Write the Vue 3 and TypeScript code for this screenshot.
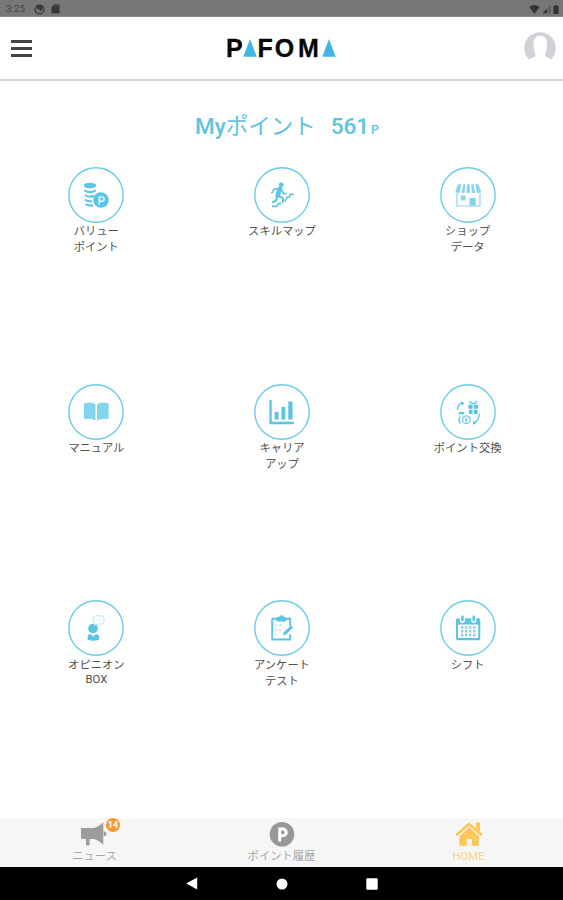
<script setup lang="ts">
interface MenuItem {
  id: string
  lines: string[]
}

const points = 561
const newsCount = 14

const items: MenuItem[] = [
  { id: 'value', lines: ['バリュー', 'ポイント'] },
  { id: 'skill', lines: ['スキルマップ'] },
  { id: 'shop', lines: ['ショップ', 'データ'] },
  { id: 'manual', lines: ['マニュアル'] },
  { id: 'career', lines: ['キャリア', 'アップ'] },
  { id: 'exchange', lines: ['ポイント交換'] },
  { id: 'opinion', lines: ['オピニオン', 'BOX'] },
  { id: 'survey', lines: ['アンケート', 'テスト'] },
  { id: 'shift', lines: ['シフト'] },
]

const calendarRows = [27.5, 31.3, 35.1]
const calendarCols = [22.2, 26.2, 30.2, 34.2]
</script>

<template>
  <div class="screen">
    <div class="status">
      <div class="status-left">
        <span class="time">3:25</span>
        <svg width="11" height="11" viewBox="0 0 11 11">
          <circle cx="5.5" cy="5.5" r="4.4" fill="none" stroke="#363636" stroke-width="1.2" />
          <path d="M3 2H8.6V5.3L5.8 8V5.3H3Z" fill="#363636" />
        </svg>
        <svg class="sd" width="9" height="10" viewBox="0 0 9 10">
          <path d="M3 .5H8.5V9.5H.5V3Z" fill="#363636" />
          <path d="M3.3 1.7v1.6M5 1.7v1.6M6.7 1.7v1.6" stroke="#666" stroke-width=".6" />
        </svg>
      </div>
      <div class="status-right">
        <svg width="11" height="9" viewBox="0 0 11 9"><path d="M.3 2Q5.5-1.8 10.7 2L5.5 8.7Z" fill="#333" /></svg>
        <svg width="9" height="9" viewBox="0 0 9 9">
          <path d="M8 .8V8.3H.5Z" fill="#686868" />
          <path d="M5 3.8V8.3H.5Z" fill="#333" />
          <path d="M8 1V8.3" stroke="#444" stroke-width=".8" />
        </svg>
        <svg width="6" height="9" viewBox="0 0 6 9"><path d="M1.8 0H4.2V1H5.6V9H.4V1H1.8Z" fill="#333" /></svg>
      </div>
    </div>

    <header class="header">
      <div class="burger"><i></i><i></i><i></i></div>
      <div class="logo" aria-label="PAFOMA">
        <span class="l-p">P</span>
        <svg width="14" height="18" viewBox="0 0 14 18"><path d="M7 0L13.7 17.7H.3Z" fill="#41b6e6" /></svg>
        <span class="l-f">F</span><span class="l-o">O</span><span class="l-m">M</span>
        <svg width="14" height="18" viewBox="0 0 14 18"><path d="M7 0L13.7 17.7H.3Z" fill="#41b6e6" /></svg>
      </div>
      <svg class="avatar" width="32" height="32" viewBox="0 0 32 32">
        <path d="M5.2 27.5A15.8 15.8 0 1 1 26.8 27.5Q24.5 25.5 21.5 24.5Q20.3 23.7 21.3 21.5Q23.2 17.8 23 12.5C23 6.5 20.8 3.7 16.3 3.7S9.6 6.5 9.6 12.5Q9.5 17.8 11.3 21.5Q12 23.7 10.8 24.5Q7.5 25.5 5.2 27.5Z" fill="#cfd2d6" />
      </svg>
    </header>

    <main class="main">
      <h1 class="points"><b>My</b>ポイント<b class="num">{{ points }}</b><small>P</small></h1>

      <div class="grid">
        <div v-for="item in items" :key="item.id" class="item">
          <svg class="icon" width="56" height="56" viewBox="0 0 56 56" fill="#5bc4e4">
            <circle cx="28" cy="28" r="27.2" fill="none" stroke="#6dcbea" stroke-width="1.4" />

            <g v-if="item.id === 'value'">
              <ellipse cx="22" cy="18.5" rx="6.2" ry="2.7" />
              <g fill="none" stroke="#5bc4e4" stroke-width="2.1">
                <path d="M16.3 23.4Q22 26.8 27.8 23.4" />
                <path d="M17 28Q21 31 26 28.8" />
                <path d="M17 32.6Q20 34.8 24 34.3" />
                <path d="M17.5 37Q20 39 25 38.5" />
              </g>
              <circle cx="33" cy="33" r="7.8" />
              <path d="M31.3 37.4V30H34a2 2 0 0 1 0 4.2H31.5" fill="none" stroke="#e0f5fc" stroke-width="1.6" />
            </g>

            <g v-else-if="item.id === 'skill'" fill="none" stroke="#5bc4e4" stroke-linejoin="round">
              <circle cx="27.2" cy="18" r="2.4" fill="#5bc4e4" stroke="none" />
              <path d="M26 21.8L23.6 28.6" stroke-width="4.6" stroke-linecap="round" />
              <path d="M24.5 21.5L20 22.4L17.5 26.4M27 22.3L29.5 26.3L32.5 26.8" stroke-width="1.7" />
              <path d="M24 28.8L29.2 31.4L28.6 36M23 28.8L22.3 33.3L18 35.7" stroke-width="2.1" />
              <path d="M18 39.4H22.5L24.8 36.4H27.3M31 34.6L33 30H35.3L36.2 27.3H39.8" stroke-width="1.7" />
            </g>

            <g v-else-if="item.id === 'shop'">
              <path d="M18 17.2H38.4L40.8 23.5V24.8Q38.6 27.2 36 25Q33.5 27.3 31 25Q28.3 27.3 25.7 25Q23 27.3 20.6 25Q17.8 27.2 15.6 24.8V23.5Z" fill="#8bd6ec" />
              <path d="M22.4 17L20.5 25.5M26.3 17L25.5 25.5M30.3 17L31 25.5M34.4 17L36 25.5" stroke="#fff" stroke-width="1.6" />
              <path d="M17 26V39H40V26" fill="none" stroke="#8bd6ec" stroke-width="1.2" />
              <path d="M20.8 28.5H25.5V33.5H20.8ZM29.5 31H35.7V38.8H29.5Z" fill="#83d3ea" />
            </g>

            <g v-else-if="item.id === 'manual'" fill="#83d5ec">
              <path d="M15.9 19.6Q23.5 17.2 27.5 20.6V36.4Q23.5 34 15.9 35Z" />
              <path d="M40.6 19.6Q33 17.2 29 20.6V36.4Q33 34 40.6 35Z" />
            </g>

            <g v-else-if="item.id === 'career'">
              <path d="M15.4 16H17.7V37.8H40V40.3H15.4Z" />
              <path d="M20.6 28H24.6V35.6H20.6ZM27.4 23H31.3V35.6H27.4ZM34.3 17.6H38.5V35.6H34.3Z" />
            </g>

            <g v-else-if="item.id === 'exchange'">
              <path d="M28.3 20.7H32.6V24.7H28.3ZM33.8 20.7H38.2V24.7H33.8ZM29 25.7H32.6V30H29ZM33.8 25.7H37.6V30H33.8Z" />
              <g fill="none" stroke="#66c9e7" stroke-width="1">
                <path d="M33 20Q28.5 19.5 29.6 17.5Q31.5 16.7 33 20Q35.5 16 37 17.5Q37.4 19.7 33 20" />
                <path d="M17.3 26.2Q17.7 20.5 22 19M39.3 29.5Q39 36.8 34 39" stroke-width="1.4" />
                <path d="M20.2 32.3Q17.8 36 20.2 39.5" stroke-width="1.4" />
                <circle cx="26.3" cy="35.7" r="3.8" stroke-width="1.3" />
              </g>
              <path d="M20.8 17.4L24.7 18.8L21.8 21.5ZM33 37V40.8L36.6 38.7ZM19.5 28H24.3V30.3H18Z" />
              <path d="M24.7 33.6L26.3 35.7L27.9 33.6M26.3 35.7V38.2M24.9 36.4H27.7" fill="none" stroke="#5bc4e4" stroke-width="1" />
            </g>

            <g v-else-if="item.id === 'opinion'">
              <circle cx="25" cy="28.5" r="4.8" />
              <path d="M19.6 39.8V36.4Q20 33.8 22.7 34.2L25.2 36.6L27.7 34.2Q30.7 33.8 31.1 36.4V39.8Q25.3 41.6 19.6 39.8Z" />
              <path d="M28 15.8H34Q36.1 16 36.1 18.5V21.5Q36 23.6 34 24H29.3L26 25.6L26.6 23.2Q24.6 22.2 25 19.5Q25 16.2 28 15.8Z" fill="#fff" stroke="#a5dff0" stroke-width=".8" />
              <path d="M27.7 20H33.5" stroke="#b5e4f2" stroke-width="1" stroke-dasharray="1.4 .8" />
            </g>

            <g v-else-if="item.id === 'survey'">
              <path d="M18.2 18.8H36.2V26M36.2 34.5V39.5H18.2V18.8" fill="none" stroke="#5bc4e4" stroke-width="1.9" />
              <path d="M22.5 17H25L26 15.6H29L30 17H32V21.6H22.5Z" />
              <path d="M21.4 25.2H23.2M21.4 29.7H23.2M21.4 34H23.2M25 25.2H28M25 29.7H27" stroke="#a5dff0" stroke-width="1.2" />
              <path d="M29.8 32.2L36.8 25.5L39 27.6L32 34.4L29 35.4Z" />
            </g>

            <g v-else>
              <path fill-rule="evenodd" d="M17.8 18.2H38.5Q40.3 18.2 40.3 20V38.3Q40.3 40.2 38.5 40.2H17.8Q16 40.2 16 38.3V20Q16 18.2 17.8 18.2ZM18 24.4V38.1H38.3V24.4Z" />
              <path d="M22.4 16.5V20.4M33.8 16.5V20.4" stroke="#fff" stroke-width="5" stroke-linecap="round" />
              <path d="M22.4 16.7V20M33.8 16.7V20" stroke="#5bc4e4" stroke-width="2.6" stroke-linecap="round" />
              <template v-for="y in calendarRows" :key="y">
                <rect v-for="x in calendarCols" :key="x" :x="x - 1.2" :y="y - 1.2" width="2.4" height="2.4" fill="#7acfe8" />
              </template>
            </g>
          </svg>
          <div class="label">
            <span v-for="line in item.lines" :key="line" :class="{ latin: line === 'BOX' }">{{ line }}</span>
          </div>
        </div>
      </div>
    </main>

    <nav class="tabs">
      <div class="tab tab-news">
        <div class="tab-icon">
          <svg width="27" height="26" viewBox="0 0 27 26" fill="#9c9c9c">
            <path d="M1.3 7H13Q18.5 5.5 22.3 1V24Q18.5 19.5 13 18H8.6V23.4Q8.6 24.4 7.6 24.4H6Q5 24.4 5 23.4V18H1.3Q0 18 0 16.7V8.3Q0 7 1.3 7ZM22.8 10.2Q25.6 10.6 25.6 12.8T22.8 15.4Z" />
          </svg>
          <span class="badge">{{ newsCount }}</span>
        </div>
        <span class="tab-label">ニュース</span>
      </div>
      <div class="tab">
        <div class="tab-icon">
          <svg width="26" height="26" viewBox="0 0 26 26">
            <circle cx="13" cy="13.3" r="12.3" fill="#989898" />
            <path d="M10.7 20.4V8H13.8a3.3 3.3 0 0 1 0 6.8H11" fill="none" stroke="#fff" stroke-width="3" />
          </svg>
        </div>
        <span class="tab-label">ポイント履歴</span>
      </div>
      <div class="tab active">
        <div class="tab-icon">
          <svg width="28" height="26" viewBox="0 0 28 26" fill="#fdc65a">
            <path d="M1.3 14.2L14 3L26.7 14.2" fill="none" stroke="#fdc65a" stroke-width="2.8" />
            <path d="M21 1.4H25V11L21 7.5ZM14 6.5L23.8 15V24.7H16.8V18H11.8V24.7H4.5V15Z" />
          </svg>
        </div>
        <span class="tab-label">HOME</span>
      </div>
    </nav>

    <div class="navbar">
      <svg width="12" height="13" viewBox="0 0 12 13"><path d="M11.2.5V12.5L.2 6.5Z" fill="#fff" /></svg>
      <svg width="12" height="12" viewBox="0 0 12 12"><circle cx="6" cy="6" r="5.5" fill="#fff" /></svg>
      <svg width="12" height="12" viewBox="0 0 12 12"><rect x=".3" y=".3" width="11.4" height="11.4" rx=".6" fill="#fff" /></svg>
    </div>
  </div>
</template>

<style>
body {
  margin: 0;
}
</style>

<style scoped>
.screen {
  width: 563px;
  height: 900px;
  display: flex;
  flex-direction: column;
  background: #fff;
  font-family: Roboto, "Noto Sans CJK JP", sans-serif;
  overflow: hidden;
}
.screen svg {
  display: block;
  flex: none;
}
.status {
  height: 17px;
  box-sizing: border-box;
  padding: 2px 4px 0 6px;
  background: #777;
  border-bottom: 1px solid #858585;
  display: flex;
  justify-content: space-between;
  align-items: center;
}
.status-left,
.status-right {
  display: flex;
  align-items: center;
}
.status-right {
  gap: 2px;
}
.time {
  width: 28px;
  font-size: 9.5px;
  line-height: 12px;
  letter-spacing: 0.2px;
  color: #444;
}
.sd {
  margin-left: 6px;
}
.header {
  height: 64px;
  box-sizing: border-box;
  padding: 0 7px 0 11px;
  border-bottom: 2px solid #d3d3d3;
  display: grid;
  grid-template-columns: 1fr auto 1fr;
  align-items: center;
}
.burger {
  width: 21px;
  display: flex;
  flex-direction: column;
  gap: 4px;
}
.burger i {
  height: 3px;
  background: #444;
}
.logo {
  height: 18px;
  margin-left: -6px;
  display: flex;
  align-items: center;
  color: #080808;
  font-family: "Liberation Sans", sans-serif;
  font-weight: 700;
  font-size: 25px;
  line-height: 18px;
  -webkit-text-stroke: 0.3px #080808;
}
.logo span {
  display: block;
  text-align: center;
}
.l-p {
  width: 17.5px;
}
.l-f {
  width: 16.5px;
}
.l-o {
  width: 22px;
}
.l-m {
  width: 26px;
}
.avatar {
  justify-self: end;
}
.main {
  flex: 1;
}
.points {
  height: 86px;
  box-sizing: border-box;
  margin: 0;
  padding-top: 28.5px;
  padding-left: 11px;
  display: flex;
  justify-content: center;
  align-items: baseline;
  font-size: 22.5px;
  line-height: 32px;
  font-weight: 400;
  color: #62c3e0;
}
.points b {
  font-weight: 500;
}
.points .num {
  margin-left: 15px;
}
.points small {
  margin-left: 2px;
  font-size: 12.5px;
  font-weight: 500;
}
.grid {
  padding: 0 2.5px 0 3.5px;
  display: grid;
  grid-template-columns: repeat(3, 1fr);
  grid-auto-rows: 216.7px;
}
.item {
  display: flex;
  flex-direction: column;
  align-items: center;
}
.label {
  margin-top: 1.4px;
  display: flex;
  flex-direction: column;
  align-items: center;
  color: #505050;
  font-size: 11.3px;
  line-height: 16px;
}
.label .latin {
  line-height: 12px;
}
.tabs {
  height: 49px;
  padding: 0 1px 0 1px;
  background: #f6f6f6;
  display: grid;
  grid-template-columns: repeat(3, 1fr);
}
.tab {
  padding-top: 3px;
  display: flex;
  flex-direction: column;
  align-items: center;
  color: #a6a6a6;
}
.tab-icon {
  position: relative;
  height: 27px;
}
.tab-label {
  font-size: 11.3px;
  line-height: 17px;
}
.active {
  color: #fdd385;
}
.badge {
  position: absolute;
  left: 25px;
  top: -3px;
  width: 14px;
  height: 14px;
  border-radius: 50%;
  background: #f89832;
  color: #fff;
  font-size: 9px;
  font-weight: 700;
  line-height: 14px;
  text-align: center;
}
.navbar {
  height: 33px;
  background: #000;
  display: flex;
  justify-content: center;
  align-items: center;
  gap: 78px;
}
</style>
